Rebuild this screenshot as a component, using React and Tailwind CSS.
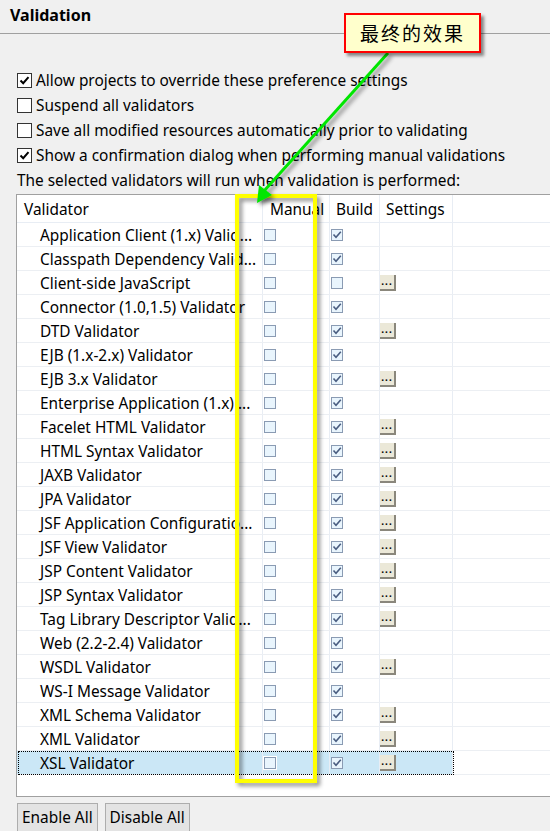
import React from 'react';

const validators = [
  ['Application Client (1.x) Valid...', true, false],
  ['Classpath Dependency Valid...', true, false],
  ['Client-side JavaScript', false, true],
  ['Connector (1.0,1.5) Validator', true, false],
  ['DTD Validator', true, true],
  ['EJB (1.x-2.x) Validator', true, false],
  ['EJB 3.x Validator', true, true],
  ['Enterprise Application (1.x) ...', true, false],
  ['Facelet HTML Validator', true, true],
  ['HTML Syntax Validator', true, true],
  ['JAXB Validator', true, true],
  ['JPA Validator', true, true],
  ['JSF Application Configuratio...', true, true],
  ['JSF View Validator', true, true],
  ['JSP Content Validator', true, true],
  ['JSP Syntax Validator', true, true],
  ['Tag Library Descriptor Valid...', true, true],
  ['Web (2.2-2.4) Validator', true, false],
  ['WSDL Validator', true, true],
  ['WS-I Message Validator', true, false],
  ['XML Schema Validator', true, true],
  ['XML Validator', true, true],
  ['XSL Validator', true, true],
];

const options = [
  ['Allow projects to override these preference settings', true],
  ['Suspend all validators', false],
  ['Save all modified resources automatically prior to validating', false],
  ['Show a confirmation dialog when performing manual validations', true],
];

function OptionBox({ checked }) {
  return (
    <span className="w-[15px] h-[15px] border border-[#333] bg-white flex items-center justify-center flex-shrink-0">
      {checked && (
        <svg width="11" height="11" viewBox="0 0 11 11">
          <path d="M1.5 5.5 L4.2 8.2 L9.5 2.2" fill="none" stroke="#000" strokeWidth="2" />
        </svg>
      )}
    </span>
  );
}

function CellBox({ checked }) {
  return (
    <span className="w-[12px] h-[12px] border border-[#8a9bb3] bg-[#e9f5fd] flex items-center justify-center">
      {checked && (
        <svg width="10" height="10" viewBox="0 0 10 10">
          <path d="M1.5 4.5 L4 7.2 L8.8 1.8" fill="none" stroke="#4a5d80" strokeWidth="1.6" />
        </svg>
      )}
    </span>
  );
}

function DotsButton() {
  return (
    <span className="w-[16px] h-[16px] bg-[#ebe8d8] border-r-2 border-b-2 border-r-[#8a877c] border-b-[#8a877c] flex items-center justify-center text-[10px] leading-none font-bold tracking-[1px] text-black pb-[3px]">
      ...
    </span>
  );
}

export default function App() {
  return (
    <div className="relative w-[550px] h-[831px] overflow-hidden bg-[#f0f0f0] text-black text-[15.4px]" style={{ fontFamily: '"Noto Sans", "Open Sans", sans-serif' }}>
      <div className="h-[34px] border-b border-[#a0a0a0] pl-[10px] flex items-center pb-[4px]">
        <span className="font-bold text-[16px]">Validation</span>
      </div>

      <div className="flex flex-col mt-[34px]">
        {options.map(([label, checked]) => (
          <div key={label} className="h-[25px] flex items-center gap-[4px] pl-[17px]">
            <OptionBox checked={checked} />
            <span className="whitespace-nowrap">{label}</span>
          </div>
        ))}
        <div className="h-[25px] flex items-center pl-[17px] whitespace-nowrap">
          The selected validators will run when validation is performed:
        </div>
      </div>

      <div className="ml-[16px] mt-[1px] w-[560px] h-[603px] border border-[#a0a0a0] bg-white flex flex-col">
        <div className="h-[28px] grid grid-cols-[246px_67px_50px_73px_1fr] border-b border-[#e8edf4]">
          <div className="pl-[7px] pt-[3px] flex items-center border-r border-[#e8edf4]">Validator</div>
          <div className="pl-[7px] pt-[3px] flex items-center border-r border-[#e8edf4] whitespace-nowrap">Manual</div>
          <div className="pl-[6px] pt-[3px] flex items-center border-r border-[#e8edf4]">Build</div>
          <div className="pl-[6px] pt-[3px] flex items-center border-r border-[#e8edf4]">Settings</div>
          <div />
        </div>
        {validators.map(([name, build, settings], i) => {
          const selected = i === validators.length - 1;
          return (
            <div key={name} className="relative h-[24px] grid grid-cols-[246px_67px_50px_73px_1fr] border-b border-[#eceff3]">
              <div className={`pl-[23px] pt-[2px] flex items-center whitespace-nowrap overflow-hidden border-r border-[#e8edf4] ${selected ? 'bg-[#cbe7f6]' : ''}`}>{name}</div>
              <div className={`pl-[1px] pt-[1px] flex items-center border-r border-[#e8edf4] ${selected ? 'bg-[#cbe7f6]' : ''}`}>
                <span className={selected ? 'bg-white p-[1px] -ml-[1px]' : ''}><CellBox checked={false} /></span>
              </div>
              <div className={`pl-[1px] pt-[1px] flex items-center border-r border-[#e8edf4] ${selected ? 'bg-[#cbe7f6]' : ''}`}>
                <CellBox checked={build} />
              </div>
              <div className={`pt-[1px] flex items-center border-r border-[#e8edf4] ${selected ? 'bg-[#cbe7f6]' : ''}`}>
                {settings && <DotsButton />}
              </div>
              <div />
              {selected && <div className="absolute left-[1px] top-0 w-[436px] h-[24px] border border-dotted border-black pointer-events-none" />}
            </div>
          );
        })}
      </div>

      <div className="flex gap-[7px] ml-[17px] mt-[6px]">
        <button className="h-[30px] px-[4px] bg-[#e3e3e3] border border-[#adadad] whitespace-nowrap">Enable All</button>
        <button className="h-[30px] px-[4px] bg-[#e3e3e3] border border-[#adadad] whitespace-nowrap">Disable All</button>
      </div>

      <svg className="absolute left-0 top-0 pointer-events-none" width="550" height="831">
        <defs>
          <filter id="sh" x="-20%" y="-20%" width="140%" height="140%">
            <feDropShadow dx="3" dy="3" stdDeviation="2" floodColor="#000" floodOpacity="0.45" />
          </filter>
        </defs>
        <rect x="237" y="196" width="78" height="585" fill="none" stroke="#ffff00" strokeWidth="4" filter="url(#sh)" />
        <g filter="url(#sh)">
          <line x1="388" y1="53" x2="264" y2="191" stroke="#00e600" strokeWidth="3" />
          <polygon points="257,203 259,185 272,195" fill="#00e600" />
        </g>
      </svg>

      <div className="absolute left-[344px] top-[13px] w-[137px] h-[40px] border-2 border-[#ff0000] bg-[#ffffcc] shadow-[3px_3px_3px_rgba(0,0,0,0.45)] flex items-center justify-center text-[19px] tracking-[2px]" style={{ fontFamily: '"Noto Sans CJK SC", sans-serif' }}>
        最终的效果
      </div>
    </div>
  );
}
